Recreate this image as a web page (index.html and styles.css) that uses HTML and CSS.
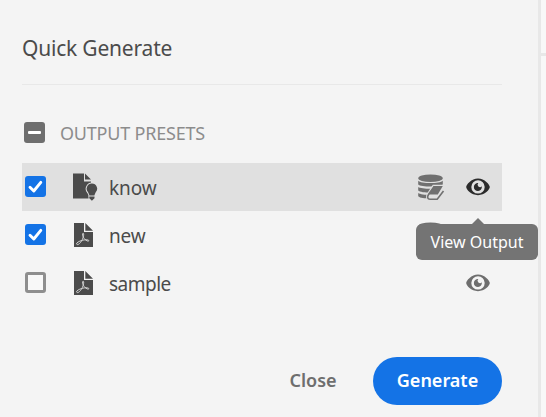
FILE: index.html
```html
<!DOCTYPE html>
<html lang="en">
<head>
<meta charset="utf-8">
<title>Quick Generate</title>
<link rel="stylesheet" href="styles.css">
</head>
<body>
<svg width="0" height="0" class="defs">
  <symbol id="check" viewBox="0 0 21 21"><path d="M5 11.200 8.800 15 15.800 6.300" fill="none" stroke="#fff" stroke-width="2.900" stroke-linecap="round" stroke-linejoin="round"/></symbol>
  <symbol id="eye" viewBox="0 0 24 18"><path fill="currentColor" fill-rule="evenodd" d="M12 .5C5.400.5.2 6.700.2 9.100c0 2.600 5 8.100 11.800 8.100s11.800-5.500 11.800-8.100C23.800 6.700 18.600.5 12 .5ZM12 2.200a6.700 6.700 0 1 1 0 13.400a6.700 6.700 0 1 1 0-13.400Z"/><path fill="currentColor" d="M12.300 5a2.300 2.300 0 1 0 3.500 3.300A4 4 0 1 1 12.300 5Z"/></symbol>
  <symbol id="pdf" viewBox="0 0 19 24"><path fill="#4b4b4b" d="M0 0h10v9h9v15H0ZM11.300 0 19 7.700h-7.700Z"/><path d="M2.700 21.200c-1-1.200 2.600-3.200 6.100-4 2.700-.7 6.200-.6 6 .6-.3 1.300-4-.9-5.200-3.200-1.100-2-1.500-4.300-.5-4.300 1.200 0 .4 3.400-.8 6.300-1.200 2.800-4.300 6.100-5.600 4.600Z" fill="none" stroke="#ddd" stroke-width=".9"/></symbol>
  <symbol id="knowledge" viewBox="0 0 26 29"><path fill="#4b4b4b" d="M1 .5h11v8h7v17H1ZM13 .5l6 6h-6Z"/><path d="M19.900 10.800a5 5 0 0 0-3.600 8.500l1.400 2.700v3.300l2.200 2.300 2.200-2.300V22l1.400-2.700a5 5 0 0 0-3.600-8.500Z" fill="#4b4b4b" stroke="#e0e0e0" stroke-width="2.400"/><path d="M19.900 10.500a5.200 5.200 0 0 0-3.800 8.800l1.200 2.700v3.300l2.600 2.500 2.600-2.500V22l1.200-2.700a5.200 5.200 0 0 0-3.800-8.800Z" fill="#4b4b4b"/><path d="M16.500 23h7" stroke="#e0e0e0" stroke-width="1"/></symbol>
  <symbol id="database" viewBox="0 0 28 27"><g fill="#707070"><ellipse cx="13.500" cy="4.300" rx="12.300" ry="3.800"/><path d="M1.200 6.700c2.500 3.200 22 3.200 24.600 0V10.500c-3 2.700-21.600 2.700-24.600 0ZM1.200 13c3 2.400 21.600 2.400 24.600 0v3.500c-3 3-21.600 3-24.600 0ZM1.200 19c3 2.300 16 2.500 20 1V24c-5 1-17 1.300-20-1.700Z"/></g><path d="M15.800 10.800H28V27H12C8.500 26 8.500 22 10 19.500Z" fill="var(--row-bg)"/><path fill="#707070" d="M17 12h8.800l-5 8.600h-9Z"/><path d="M17.300 12.300 11.800 20c-2 3-1.300 5.300 1.200 5.300h7.200l6.300-8.300" fill="none" stroke="#707070" stroke-width="1.600"/></symbol>
</svg>
<main class="dialog">
  <h1 class="title"><span>Quick Generate</span></h1>
  <div class="presets-head">
    <span class="checkbox mixed"></span>
    <span class="head-label">OUTPUT PRESETS</span>
  </div>
  <div class="row selected">
    <svg class="checkbox on"><use href="#check"/></svg>
    <span class="kind"><svg class="knowledge"><use href="#knowledge"/></svg></span>
    <span class="name know">know</span>
    <svg class="database"><use href="#database"/></svg>
    <span class="view"><svg class="eye"><use href="#eye"/></svg><span class="tooltip">View Output</span></span>
  </div>
  <div class="row">
    <svg class="checkbox on"><use href="#check"/></svg>
    <span class="kind"><svg class="pdf"><use href="#pdf"/></svg></span>
    <span class="name new">new</span>
    <svg class="database"><use href="#database"/></svg>
    <span class="view"><svg class="eye"><use href="#eye"/></svg></span>
  </div>
  <div class="row">
    <span class="checkbox"></span>
    <span class="kind"><svg class="pdf"><use href="#pdf"/></svg></span>
    <span class="name sample">sample</span>
    <span class="view"><svg class="eye"><use href="#eye"/></svg></span>
  </div>
  <footer class="actions">
    <button class="close">Close</button>
    <button class="generate">Generate</button>
  </footer>
</main>
<aside class="backdrop"></aside>
</body>
</html>
```
FILE: styles.css
```css
* { box-sizing: border-box; }
body {
  margin: 0;
  height: 417px;
  display: flex;
  overflow: hidden;
  background: #f4f4f4;
  font-family: "Noto Sans", "Open Sans", sans-serif;
  color: #4b4b4b;
}
.defs { position: absolute; }
.dialog {
  width: 541px;
  padding: 0 36px 0 22px;
  border-right: 3px solid #e8e8e8;
}
.title {
  margin: 0;
  height: 85px;
  padding-top: 34px;
  border-bottom: 1px solid #e8e8e8;
  font-size: 21px;
  line-height: 28px;
  font-weight: 400;
  letter-spacing: -0.2px;
}
.presets-head {
  height: 78px;
  padding: 17px 0 0 2px;
  display: flex;
  align-items: center;
}
.head-label {
  margin-left: 15px;
  padding-top: 1px;
  font-size: 18px;
  line-height: 24px;
  letter-spacing: -0.2px;
  color: #8c8c8c;
}
.checkbox {
  width: 21px;
  height: 21px;
  flex: none;
  border: 3px solid #8e8e8e;
  border-radius: 3px;
  background: #f8f8f8;
}
.checkbox.on { border: 0; background: #1473e6; }
.checkbox.mixed {
  border: 0;
  background: #6e6e6e;
  display: flex;
  align-items: center;
  justify-content: center;
}
.checkbox.mixed::before {
  content: "";
  width: 13px;
  height: 3px;
  border-radius: 1px;
  background: #fff;
}
.row {
  --row-bg: #f4f4f4;
  height: 48px;
  padding: 0 12px 0 3px;
  display: flex;
  align-items: center;
  background: var(--row-bg);
}
.row .checkbox { margin-bottom: 1px; }
.row.selected { --row-bg: #e0e0e0; }
.kind { width: 63px; padding-left: 28px; flex: none; display: flex; }
.pdf { width: 19px; height: 24px; flex: none; }
.knowledge { width: 26px; height: 29px; margin-left: -2px; flex: none; }
.name { flex: 1; padding-top: 2px; font-size: 19px; line-height: 26px; }
.know { letter-spacing: -0.1px; }
.new { letter-spacing: -0.2px; }
.sample { letter-spacing: -0.5px; }
.database { width: 28px; height: 27px; margin: 1px 21px 0 0; }
.view { position: relative; display: flex; color: #6e6e6e; }
.selected .view { color: #2c2c2c; }
.eye { width: 24px; height: 18px; }
.tooltip {
  position: absolute;
  top: 46px;
  right: -48px;
  width: 122px;
  height: 36px;
  border-radius: 6px;
  background: #747474;
  color: #fff;
  font-size: 16px;
  line-height: 36px;
  text-align: center;
  white-space: nowrap;
  z-index: 1;
}
.tooltip::before {
  content: "";
  position: absolute;
  left: 56px;
  top: -6px;
  border: 6px solid transparent;
  border-top: 0;
  border-bottom-color: #747474;
}
.actions { display: flex; justify-content: flex-end; padding-top: 50px; }
button {
  height: 48px;
  padding: 0;
  border: 0;
  background: none;
  font: 600 18px/46px "Noto Sans", sans-serif;
  color: #6e6e6e;
}
.close { width: 48px; height: 46px; margin-right: 36px; white-space: nowrap; }
.generate { width: 129px; padding-bottom: 2px; border-radius: 24px; background: #1473e6; color: #fff; }
.backdrop {
  flex: 1;
  background: linear-gradient(#e8e8e8, #e8e8e8) 0 53px / 100% 3px no-repeat #f8f8f8;
}
```
